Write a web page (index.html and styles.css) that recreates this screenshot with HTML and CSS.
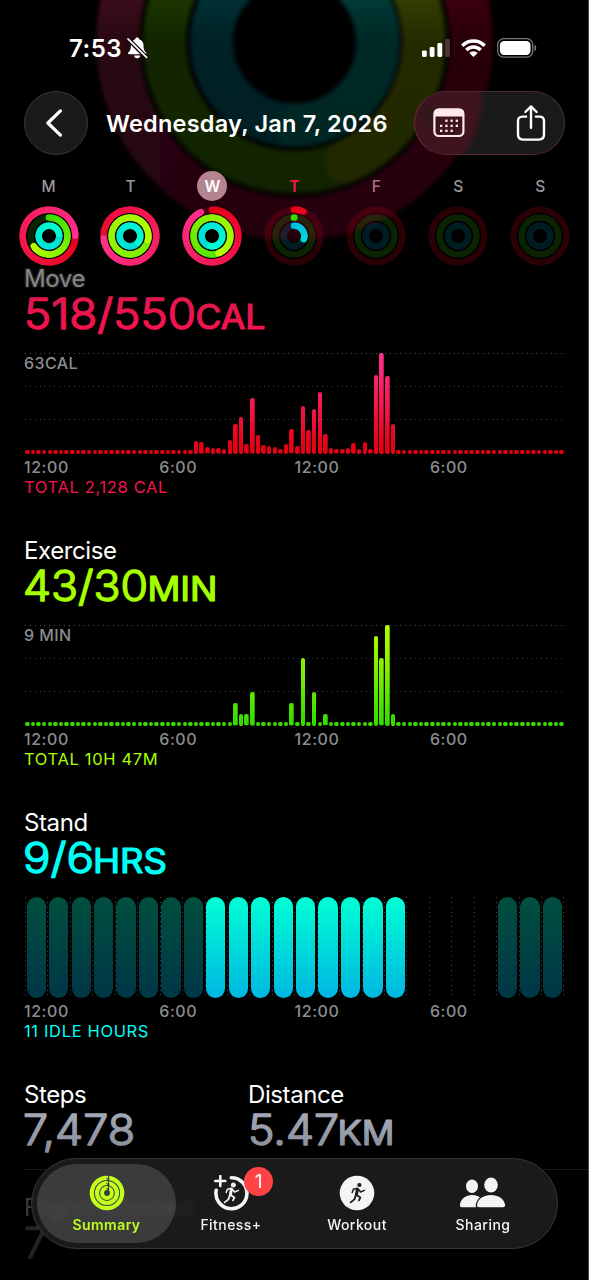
FILE: index.html
```html
<!DOCTYPE html>
<html lang="en">
<head>
    <meta charset="UTF-8">
    <meta name="viewport" content="width=device-width, initial-scale=1.0">
    <title>Activity</title>
    <link rel="stylesheet" href="styles.css">
</head>
<body>
    <svg class="defs" width="0" height="0">
        <defs>
            <linearGradient id="move-text" x1="0" y1="0" x2="0" y2="1">
                <stop offset="0" stop-color="#d61a4c"/>
                <stop offset="1" stop-color="#ff0f50"/>
            </linearGradient>
            <linearGradient id="gray-text" x1="0" y1="0" x2="0" y2="1">
                <stop offset="0" stop-color="#a9afbd"/>
                <stop offset="1" stop-color="#868a95"/>
            </linearGradient>
        </defs>
        <symbol id="runner" viewBox="0 0 36 36">
            <circle cx="20.4" cy="10" r="2.1" fill="currentColor"/>
            <g fill="none" stroke="currentColor" stroke-linecap="round" stroke-linejoin="round">
                <path stroke-width="3" d="M18.4 14.6 L17.4 19.6"/>
                <path stroke-width="1.5" d="M18.6 13.3 L14.4 14.2 L13.2 17.6 M19.4 14.2 L21.6 17 L25.4 15.4"/>
                <path stroke-width="1.8" d="M17.6 20 L21.4 22.4 L20 25.4 M16.8 20.4 L15.4 24.4 L11.6 27.4"/>
            </g>
        </symbol>
    </svg>

    <div class="screen">
        <svg class="backdrop" width="588" height="260" viewBox="0 0 588 260">
            <defs>
                <filter id="soft" x="-10%" y="-10%" width="120%" height="120%">
                    <feGaussianBlur stdDeviation="2.2"/>
                </filter>
                <linearGradient id="bg-red" gradientUnits="userSpaceOnUse" x1="95" y1="0" x2="494" y2="0">
                    <stop offset="0" stop-color="#3d081c"/>
                    <stop offset="1" stop-color="#3e0010"/>
                </linearGradient>
                <linearGradient id="bg-top" x1="0" y1="0" x2="0" y2="1">
                    <stop offset="0" stop-color="#000" stop-opacity="0.05"/>
                    <stop offset="0.16" stop-color="#000" stop-opacity="0.34"/>
                    <stop offset="1" stop-color="#000" stop-opacity="0.4"/>
                </linearGradient>
            </defs>
            <g filter="url(#soft)" fill="none" stroke-width="43">
                <circle cx="294.5" cy="42" r="177" stroke="url(#bg-red)"/>
                <circle cx="294.5" cy="42" r="130" stroke="#1e3700"/>
                <path d="M294.5 -88 A130 130 0 0 1 346 161" stroke="#363f00" stroke-linecap="round"/>
                <circle cx="294.5" cy="42" r="83" stroke="#003138"/>
                <path d="M294.5 -41 A83 83 0 0 1 296 125" stroke="#003c37" stroke-linecap="round"/>
            </g>
            <rect width="588" height="260" fill="url(#bg-top)"/>
        </svg>

        <div class="status-bar">
            <div class="clock">
                <span>7:53</span>
                <svg width="21" height="22" viewBox="0 0 21 22">
                    <path fill="#fff" d="M10.2 0.6 c-1.1 0-1.9.7-2 1.6 C5.4 3 3.9 5.400 3.900 8.300 C3.900 12.500 3 14 1.300 15.600 C0.700 16.300 1 17.300 2 17.300 H18.400 C19.400 17.300 19.700 16.300 19.100 15.600 C17.400 14 16.500 12.500 16.500 8.300 C16.500 5.400 15 3 12.200 2.200 C12.100 1.300 11.300 0.600 10.200 0.600Z"/>
                    <path fill="#fff" d="M7.200 18.500 H13.200 A3 2.700 0 0 1 7.200 18.500Z"/>
                    <path stroke="#180408" stroke-width="4.400" d="M0 1 L20 21"/>
                    <path stroke="#fff" stroke-width="1.700" stroke-linecap="round" d="M1 1.800 L19.600 20.300"/>
                </svg>
            </div>
            <div class="signals">
                <svg width="28" height="18" viewBox="0 0 28 18" fill="#fff">
                    <rect x="0" y="11.500" width="4.800" height="6.500" rx="1.400"/>
                    <rect x="7.700" y="8" width="4.800" height="10" rx="1.400"/>
                    <rect x="15.400" y="4" width="4.800" height="14" rx="1.400"/>
                    <rect x="23.100" y="0" width="4.800" height="18" rx="1.400" fill="#4b3538"/>
                </svg>
                <svg width="25" height="18" viewBox="0 0 25 18" fill="none" stroke="#fff">
                    <path stroke-width="3.400" d="M1.300 6.700 A15.600 15.600 0 0 1 23.700 6.700"/>
                    <path stroke-width="3.400" d="M5.300 11 A10 10 0 0 1 19.700 11"/>
                    <path fill="#fff" stroke="none" d="M12.500 18 L8.300 13.900 A6 6 0 0 1 16.700 13.900Z"/>
                </svg>
                <svg width="40" height="20" viewBox="0 0 40 20">
                    <rect x="0.700" y="0.700" width="35" height="18.400" rx="6" fill="none" stroke="#77777a" stroke-width="1.300"/>
                    <rect x="2.900" y="2.900" width="30.600" height="14" rx="4.200" fill="#fff"/>
                    <path fill="#77777a" d="M37.300 6.800 C40 8 40 11.800 37.300 13Z"/>
                </svg>
            </div>
        </div>

        <header class="header">
            <button class="glass back" aria-label="Back">
                <svg width="18" height="28" viewBox="0 0 18 28" fill="none" stroke="#fff" stroke-width="3.200" stroke-linecap="round" stroke-linejoin="round">
                    <path d="M15.400 1.900 L2.900 14 L15.400 26.100"/>
                </svg>
            </button>
            <h1>Wednesday, Jan 7, 2026</h1>
            <div class="glass actions">
                <svg width="32" height="30" viewBox="0 0 32 30">
                    <rect x="1.400" y="1.400" width="29" height="26.600" rx="4.500" fill="none" stroke="#ffe9ef" stroke-width="2.200"/>
                    <path fill="#ffe9ef" d="M1 8.500 V5 Q1 1 5 1 H27 Q31 1 31 5 V8.500Z"/>
                    <g fill="#ffe9ef">
                        <rect x="12.300" y="11.600" width="2.300" height="2.300"/><rect x="17.500" y="11.600" width="2.300" height="2.300"/><rect x="22.700" y="11.600" width="2.300" height="2.300"/>
                        <rect x="7" y="16.700" width="2.300" height="2.300"/><rect x="12.300" y="16.700" width="2.300" height="2.300"/><rect x="17.500" y="16.700" width="2.300" height="2.300"/><rect x="22.700" y="16.700" width="2.300" height="2.300"/>
                        <rect x="7" y="21.700" width="2.300" height="2.300"/><rect x="12.300" y="21.700" width="2.300" height="2.300"/><rect x="17.500" y="21.700" width="2.300" height="2.300"/>
                    </g>
                </svg>
                <svg width="30" height="37" viewBox="0 0 30 37" fill="none" stroke="#fff" stroke-width="2.400" stroke-linecap="round" stroke-linejoin="round">
                    <path d="M10.200 11.600 H6.500 Q2 11.600 2 16.200 V29.600 Q2 34.600 7 34.600 H23 Q28 34.600 28 29.600 V16.200 Q28 11.600 23.500 11.600 H19.800"/>
                    <path d="M15 22.700 V1.800 M9.400 7 L15 1.400 L20.600 7"/>
                </svg>
            </div>
        </header>

        <div class="week">
            <div class="day"><span>M</span><svg class="rings"></svg></div>
            <div class="day"><span>T</span><svg class="rings"></svg></div>
            <div class="day selected"><span>W</span><svg class="rings"></svg></div>
            <div class="day today"><span>T</span><svg class="rings"></svg></div>
            <div class="day friday"><span>F</span><svg class="rings"></svg></div>
            <div class="day"><span>S</span><svg class="rings"></svg></div>
            <div class="day"><span>S</span><svg class="rings"></svg></div>
        </div>

        <main>
            <section class="metric move">
                <h2>Move</h2>
                <svg class="value" width="260" height="43">
                    <text x="0" y="36" textLength="172" lengthAdjust="spacingAndGlyphs">518/550</text>
                    <text class="unit" x="171.500" y="36" textLength="70" lengthAdjust="spacingAndGlyphs">CAL</text>
                </svg>
                <div class="chart" id="move-chart"><span class="peak">63CAL</span></div>
                <div class="axis"><span>12:00</span><span>6:00</span><span>12:00</span><span>6:00</span></div>
                <p class="total">TOTAL 2,128 CAL</p>
            </section>

            <section class="metric exercise">
                <h2>Exercise</h2>
                <svg class="value" width="260" height="43">
                    <text x="-1" y="36" textLength="125" lengthAdjust="spacingAndGlyphs">43/30</text>
                    <text class="unit" x="123.500" y="36" textLength="70" lengthAdjust="spacingAndGlyphs">MIN</text>
                </svg>
                <div class="chart" id="exercise-chart"><span class="peak">9 MIN</span></div>
                <div class="axis"><span>12:00</span><span>6:00</span><span>12:00</span><span>6:00</span></div>
                <p class="total">TOTAL 10H 47M</p>
            </section>

            <section class="metric stand">
                <h2>Stand</h2>
                <svg class="value" width="260" height="43">
                    <text x="-1" y="36" textLength="71" lengthAdjust="spacingAndGlyphs">9/6</text>
                    <text class="unit" x="69" y="36" textLength="74" lengthAdjust="spacingAndGlyphs">HRS</text>
                </svg>
                <div class="hours" id="stand-chart"></div>
                <div class="axis"><span>12:00</span><span>6:00</span><span>12:00</span><span>6:00</span></div>
                <p class="total">11 IDLE HOURS</p>
            </section>

            <div class="stats">
                <section class="stat">
                    <h2>Steps</h2>
                    <svg class="value" width="160" height="43">
                        <text x="-1" y="36" textLength="112" lengthAdjust="spacingAndGlyphs">7,478</text>
                    </svg>
                </section>
                <section class="stat">
                    <h2>Distance</h2>
                    <svg class="value" width="200" height="43">
                        <text x="0" y="36" textLength="91" lengthAdjust="spacingAndGlyphs">5.47</text>
                        <text class="unit" x="89.500" y="36" textLength="57" lengthAdjust="spacingAndGlyphs">KM</text>
                    </svg>
                </section>
            </div>
            <section class="stat flights">
                <h2>Flights Climbed</h2>
                <svg class="value" width="160" height="43"><text x="0" y="36">7</text></svg>
            </section>
        </main>

        <nav class="tab-bar">
            <a class="tab active">
                <svg width="36" height="36" viewBox="0 0 36 36" fill="none" stroke="#c2ff1c">
                    <circle cx="18" cy="18" r="15.200" stroke-width="4.200"/>
                    <circle cx="18" cy="18" r="10" stroke-width="4.200"/>
                    <circle cx="18" cy="18" r="4.900" stroke-width="4"/>
                    <path stroke="#3b3b3b" stroke-width="1.100" d="M19.600 0 V18 M17.500 3.200 L19.500 5 M17.500 8.200 L19.500 10 M17.500 13.200 L19.500 15"/>
                </svg>
                <span>Summary</span>
            </a>
            <a class="tab">
                <svg width="36" height="36" viewBox="0 0 36 36" fill="none" stroke="#f4f4f4">
                    <path stroke-width="3.600" stroke-linecap="round" d="M18.300 2.700 A15.500 15.500 0 1 1 3.200 15.300"/>
                    <path stroke-width="2.600" stroke-linecap="round" d="M7.300 1 V11 M2.300 6 H12.300"/>
                    <use href="#runner" color="#f4f4f4"/>
                </svg>
                <span>Fitness+</span>
                <b class="badge">1</b>
            </a>
            <a class="tab">
                <svg width="36" height="36" viewBox="0 0 36 36">
                    <circle cx="18" cy="18" r="17.300" fill="#f4f4f4"/>
                    <use href="#runner" color="#191919"/>
                </svg>
                <span>Workout</span>
            </a>
            <a class="tab">
                <svg width="48" height="36" viewBox="0 0 48 36" fill="#f4f4f4">
                    <ellipse cx="13" cy="11.300" rx="6" ry="6.700"/>
                    <path d="M3 32.300 Q0.500 32.300 1 29.500 C2 23.500 7 20 13 20 C17.500 20 21 21.500 23.500 25 V32.300Z"/>
                    <ellipse cx="32" cy="10" rx="6.800" ry="7.500"/>
                    <path stroke="#191919" stroke-width="2.600" paint-order="stroke" d="M20.300 32.300 Q17.500 32.300 18.100 29.500 C19.300 23.500 24.800 20 32 20 C39.300 20 44.800 23.500 46 29.500 Q46.600 32.300 43.800 32.300Z"/>
                </svg>
                <span>Sharing</span>
            </a>
        </nav>
    </div>
    <script src="script.js"></script>
</body>
</html>
```
FILE: styles.css
```css
* {
    box-sizing: border-box;
}
body {
    margin: 0;
    background-color: #000;
    color: #fff;
    font-family: Inter, "Liberation Sans", sans-serif;
}
h1, h2, p {
    margin: 0;
    font-weight: 400;
}
svg {
    display: block;
    flex: none;
}
.defs {
    position: absolute;
}
.screen {
    position: relative;
    width: 589px;
    height: 1280px;
    overflow: hidden;
    border-right: 1px solid #464646;
}
.backdrop {
    position: absolute;
    top: 0;
    left: 0;
}

/* status bar */
.status-bar {
    position: relative;
    display: flex;
    justify-content: space-between;
    align-items: center;
    height: 91px;
    padding: 5px 51px 0 69px;
}
.clock {
    display: flex;
    align-items: center;
    gap: 5px;
    font-size: 24px;
    font-weight: 600;
    letter-spacing: 0.5px;
}
.signals {
    display: flex;
    align-items: center;
    gap: 11px;
}

/* header */
.header {
    position: relative;
    display: flex;
    align-items: center;
    height: 64px;
    padding: 0 23px 0 24px;
}
.header h1 {
    flex: 1;
    padding-left: 18px;
    font-size: 23.5px;
    font-weight: 600;
    letter-spacing: 0.22px;
    white-space: nowrap;
}
.glass {
    display: flex;
    align-items: center;
    height: 64px;
    border: 1px solid #383838;
    border-radius: 32px;
    background-color: #1a1a1a;
}
.back {
    width: 64px;
    justify-content: center;
    padding: 0 4px 0 0;
}
.actions {
    width: 151px;
    justify-content: space-between;
    padding: 0 18px;
    border-color: #4b2a31 #383838 #5b2530 #6b2733;
    background:
        radial-gradient(ellipse 14px 18px at 14px 22px, #2a1a18, transparent),
        radial-gradient(ellipse 82px 90px at -12px 8px, #40141f 90%, transparent),
        #1a1a1a;
}

/* week */
.week {
    position: relative;
    display: grid;
    grid-template-columns: repeat(7, 81.95px);
    width: 574px;
    height: 110px;
    margin-left: 7.55px;
    padding-top: 16px;
}
.day {
    display: flex;
    flex-direction: column;
    align-items: center;
    gap: 5px;
    color: #98989d;
    font-size: 15.5px;
    font-weight: 500;
}
.day span {
    width: 30px;
    height: 30px;
    border-radius: 50%;
    line-height: 31px;
    text-align: center;
}
.rings {
    width: 60px;
    height: 60px;
}
.selected span {
    background-color: #b48491;
    color: #fff;
    font-weight: 600;
}
.today span {
    color: #f5194f;
    font-weight: 600;
}
.friday span {
    color: #a57480;
}

/* metrics */
main {
    position: relative;
    padding-left: 24px;
}
.metric {
    height: 272px;
}
h2 {
    font-size: 24px;
    line-height: 28px;
    letter-spacing: -0.4px;
}
.move h2 {
    color: #858585;
    text-shadow: 0 0 3px #555;
}
.value {
    overflow: visible;
}
.value text {
    font-size: 42px;
    font-weight: 300;
    stroke-width: 1.5px;
    stroke-linejoin: round;
}
.value .unit {
    font-size: 33.5px;
    font-weight: 400;
    stroke-width: 1.2px;
}
.move text {
    fill: url(#move-text);
    stroke: url(#move-text);
}
.exercise text {
    fill: #a6ff00;
    stroke: #a6ff00;
}
.stand text {
    fill: #00fff6;
    stroke: #00fff6;
}
.stat text {
    fill: url(#gray-text);
    stroke: url(#gray-text);
}
.chart {
    position: relative;
    display: grid;
    grid-template-columns: repeat(96, 1fr);
    align-items: end;
    justify-items: center;
    width: 540px;
    height: 101px;
    margin: 16.6px 0 0 0.5px;
    background:
        repeating-linear-gradient(90deg, #555 0 1px, transparent 1px 4.87px) 0 0 / 539px 1px no-repeat,
        repeating-linear-gradient(90deg, #3c3c3c 0 1px, transparent 1px 4.87px) 0 33px / 539px 1px no-repeat,
        repeating-linear-gradient(90deg, #3c3c3c 0 1px, transparent 1px 4.87px) 0 66px / 539px 1px no-repeat;
}
.peak {
    position: absolute;
    top: 1.4px;
    left: -0.5px;
    color: #8c8c91;
    font-size: 16px;
    font-weight: 500;
    line-height: 18px;
    letter-spacing: 0.4px;
}
.bar {
    width: 4.4px;
    border-radius: 2.2px;
}
.move .bar {
    background: linear-gradient(#ff2f92, #f5184c 50%, #e60012 92%) bottom / 100% 101px;
}
.exercise .bar {
    background: linear-gradient(#b4ff00, #78ee00 50%, #38dc00 95%) bottom / 100% 101px;
}
.hours {
    display: grid;
    grid-template-columns: repeat(24, 22.45px);
    width: 540px;
    height: 101px;
    margin: 16.6px 0 0 1px;
}
.hour {
    padding: 0 1.5px 0 1.7px;
    background: repeating-linear-gradient(#4a4a4a 0 1px, transparent 1px 4.87px) 0 0 / 1px 100% no-repeat;
}
.hour:last-child {
    background:
        repeating-linear-gradient(#4a4a4a 0 1px, transparent 1px 4.87px) 0 0 / 1px 100% no-repeat,
        repeating-linear-gradient(#4a4a4a 0 1px, transparent 1px 4.87px) 100% 0 / 1px 100% no-repeat;
}
.hour i {
    display: block;
    height: 101px;
    border-radius: 10px;
}
.hour .idle {
    background: linear-gradient(#004f3f, #003946 88%);
}
.hour .stood {
    background: linear-gradient(#00ffd5, #00b9e0 96%);
}
.axis {
    display: grid;
    grid-template-columns: repeat(4, 135.3px);
    margin-top: 3px;
    color: #8c8c91;
    font-size: 16px;
    font-weight: 500;
    line-height: 20px;
    letter-spacing: 0.55px;
}
.total {
    font-size: 16.5px;
    line-height: 20px;
    letter-spacing: 0.65px;
}
.move .total {
    color: #fa114f;
}
.exercise .total {
    color: #a6ff00;
}
.stand .total {
    color: #00fff6;
}
.stats {
    display: grid;
    grid-template-columns: 224px 1fr;
    height: 89px;
    border-bottom: 1px solid #191919;
}
.flights {
    padding-top: 24px;
    opacity: 0.22;
}

/* tab bar */
.tab-bar {
    position: absolute;
    top: 1158px;
    left: 31px;
    display: flex;
    width: 527px;
    height: 91px;
    padding: 5px;
    border: 1px solid #373737;
    border-radius: 46px;
    background-color: rgba(33, 33, 33, 0.78);
    backdrop-filter: blur(2px);
}
.tab {
    position: relative;
    display: flex;
    flex: none;
    flex-direction: column;
    align-items: center;
    width: 126px;
    padding-top: 11px;
    color: #f4f4f4;
    font-size: 14px;
    font-weight: 500;
    line-height: 20px;
    letter-spacing: 0.45px;
}
.tab span {
    margin-top: 4px;
}
.tab.active {
    width: 139px;
    margin-right: -8px;
    border-radius: 40px;
    background-color: rgba(255, 255, 255, 0.145);
    color: #c2ff1c;
    font-weight: 600;
}
.badge {
    position: absolute;
    top: 3px;
    left: 76px;
    width: 29px;
    height: 29px;
    border-radius: 50%;
    background-color: #ff4245;
    color: #fff;
    font-size: 19px;
    font-weight: 400;
    line-height: 29px;
    letter-spacing: 0;
    text-align: center;
}
```
FILE: script.js
```js
const NS = 'http://www.w3.org/2000/svg';

const COLORS = [
    { r: 26.3, from: [230, 0, 22], to: [255, 48, 140], track: 'rgba(235, 0, 30, 0.17)' },
    { r: 18.4, from: [56, 220, 0], to: [182, 255, 0], track: 'rgba(60, 220, 0, 0.16)' },
    { r: 10.3, from: [0, 185, 225], to: [0, 255, 208], track: 'rgba(0, 180, 225, 0.16)' }
];

// start and end angle of each ring, clockwise from the top,
// and how far along the gradient it starts
const week = [
    [[-270, 90, 0], [0, 236, 0], [-280, 80, 0.5]],
    [[-95, 265, 0.2], [-255, 105, 0.5], [-230, 130, 0.5]],
    [[0, 335, 0], [-200, 160, 0.2], [-170, 190, 0.45]],
    [[0, 21, 0], [0, 1, 0], [0, 108, 0]],
    [], [], []
];

function add(svg, name, attrs) {
    const el = document.createElementNS(NS, name);
    for (const key in attrs) el.setAttribute(key, attrs[key]);
    svg.appendChild(el);
    return el;
}

function point(r, deg) {
    const a = (deg - 90) * Math.PI / 180;
    return (30 + r * Math.cos(a)).toFixed(2) + ' ' + (30 + r * Math.sin(a)).toFixed(2);
}

function drawRing(svg, ring, range) {
    add(svg, 'circle', { cx: 30, cy: 30, r: ring.r, fill: 'none', stroke: ring.track, 'stroke-width': 6.5 });
    if (!range) return;
    const [start, end, offset] = range;
    const full = end - start === 360;
    const steps = Math.max(1, Math.ceil((end - start) / 6));
    const size = (end - start) / steps;
    for (let i = 0; i < steps; i++) {
        const t = offset + (1 - offset) * (i + 1) / steps * Math.min(1, (end - start) / 240);
        const color = ring.from.map((c, k) => Math.round(c + (ring.to[k] - c) * t));
        const a = start + i * size;
        const last = i === steps - 1;
        if (last && full) {
            const [cx, cy] = point(ring.r, end + 2).split(' ');
            add(svg, 'circle', { cx: cx, cy: cy, r: 3.2, fill: 'rgba(0, 0, 0, 0.18)' });
        }
        add(svg, 'path', {
            d: `M${point(ring.r, a)} A${ring.r} ${ring.r} 0 0 1 ${point(ring.r, a + size + (last ? 0 : 4))}`,
            fill: 'none',
            stroke: `rgb(${color})`,
            'stroke-width': 6.5,
            'stroke-linecap': last || (i === 0 && !full) ? 'round' : 'butt'
        });
    }
}

document.querySelectorAll('.rings').forEach((svg, i) => {
    svg.setAttribute('viewBox', '0 0 60 60');
    COLORS.forEach((ring, k) => drawRing(svg, ring, week[i][k]));
});

// one bar for every 15 minutes, value is the height in px
const moveBars = {
    30: 12.7, 31: 11.7, 32: 6.3, 33: 5.7, 34: 5.7, 35: 5, 36: 13.3, 37: 30, 38: 36.7, 39: 9.7,
    40: 55.7, 41: 18.7, 42: 8.7, 43: 7.7, 44: 7, 45: 4.7, 46: 10, 47: 24.3, 48: 8, 49: 48,
    50: 24, 51: 44.7, 52: 61.7, 53: 20, 54: 5.7, 55: 4.3, 56: 4.7, 57: 5.7, 58: 10.7, 59: 4.5,
    60: 11.7, 61: 4.5, 62: 78.3, 63: 101, 64: 78, 65: 29.7
};
const exerciseBars = {
    37: 22.4, 38: 11.2, 39: 11.2, 40: 33.7, 47: 22.4, 49: 67.3, 51: 33.7, 53: 11.2,
    62: 89.8, 63: 67.3, 64: 101, 65: 11.2
};

function drawBars(id, bars) {
    const chart = document.getElementById(id);
    for (let i = 0; i < 96; i++) {
        const bar = document.createElement('div');
        bar.className = 'bar';
        bar.style.height = (bars[i] || 4) + 'px';
        chart.appendChild(bar);
    }
}

drawBars('move-chart', moveBars);
drawBars('exercise-chart', exerciseBars);

const hours = document.getElementById('stand-chart');
for (let h = 0; h < 24; h++) {
    const hour = document.createElement('div');
    hour.className = 'hour';
    if (h < 17 || h > 20) {
        const pill = document.createElement('i');
        pill.className = h > 7 && h < 17 ? 'stood' : 'idle';
        hour.appendChild(pill);
    }
    hours.appendChild(hour);
}
```
